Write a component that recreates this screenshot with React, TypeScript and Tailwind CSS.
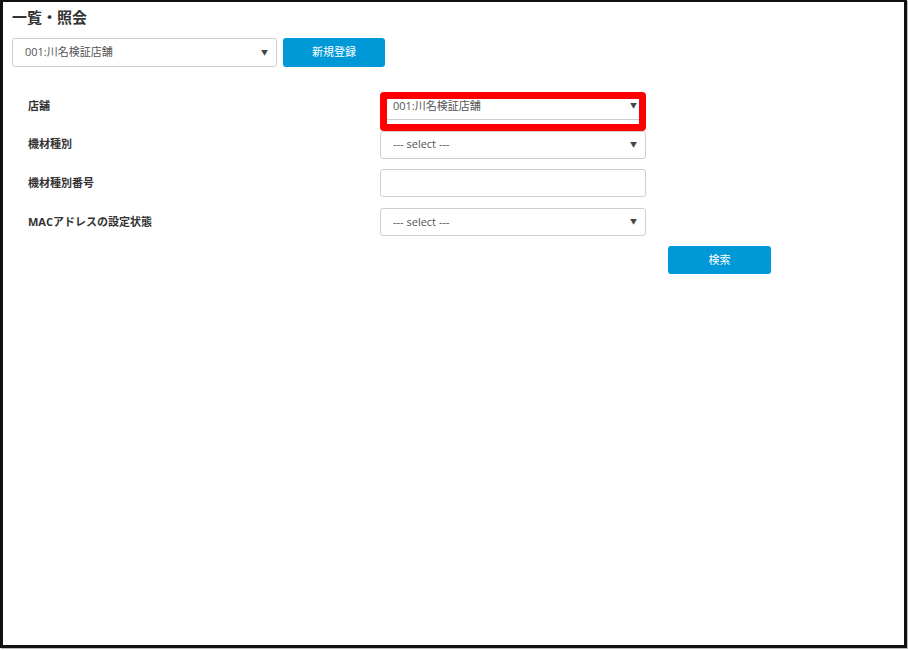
import React from "react";

const font = { fontFamily: '"Open Sans", "Noto Sans CJK JP", sans-serif' };

function Select({ value, className = "" }: { value: string; className?: string }) {
  return (
    <div
      className={`relative flex items-center h-7 border border-[#cfcfcf] rounded-[3px] bg-white pl-3 pr-6 text-[11px] text-[#555] ${className}`}
    >
      <span>{value}</span>
      <span className="absolute right-[8px] top-1/2 -translate-y-1/2 text-[7px] text-[#444]">▼</span>
    </div>
  );
}

function Row({ label, children }: { label: string; children: React.ReactNode }) {
  return (
    <div className="flex items-center h-7">
      <div className="w-[352px] text-[11px] font-bold text-[#333]">{label}</div>
      <div className="w-[266px]">{children}</div>
    </div>
  );
}

export default function App() {
  return (
    <div className="bg-white w-[908px] h-[650px]" style={font}>
      <div className="w-[907px] h-[648px] border-t-2 border-l-[3px] border-r-[3px] border-b-[3px] border-[#111] shadow-[1px_1px_0_#bbb] pl-[9px] pt-[5px]">
        <h1 className="text-[15px] leading-5 font-bold text-[#333]">一覧・照会</h1>

        <div className="flex items-center gap-[6px] mt-[11px]">
          <Select value="001:川名検証店舗" className="w-[265px] h-[29px]" />
          <button className="w-[102px] h-[29px] rounded-[3px] bg-[#0099d8] text-white text-[11px]">
            新規登録
          </button>
        </div>

        <div className="flex flex-col gap-[10.7px] mt-[25px] pl-4">
          <Row label="店舗">
            <div className="relative">
              <Select value="001:川名検証店舗" />
              <div className="absolute left-0 top-0 w-[266px] h-[39px] border-[7px] border-[#ff0000] rounded-[4px]" />
            </div>
          </Row>
          <Row label="機材種別">
            <Select value="--- select ---" />
          </Row>
          <Row label="機材種別番号">
            <div className="h-7 border border-[#cfcfcf] rounded-[3px] bg-white" />
          </Row>
          <Row label="MACアドレスの設定状態">
            <Select value="--- select ---" />
          </Row>
        </div>

        <div className="pl-[656px] mt-[10px]">
          <button className="w-[103px] h-7 rounded-[3px] bg-[#0099d8] text-white text-[11px]">
            検索
          </button>
        </div>
      </div>
    </div>
  );
}
